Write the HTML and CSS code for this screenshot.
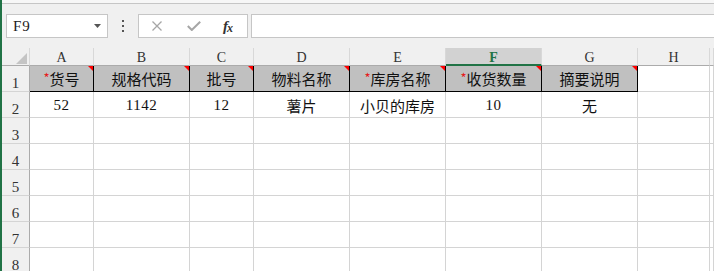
FILE: index.html
```html
<!DOCTYPE html>
<html lang="zh-CN">
<head>
<meta charset="utf-8">
<title>Sheet</title>
<link rel="stylesheet" href="styles.css">
</head>
<body>
<div class="app">
  <div class="topstrip"></div>
  <div class="toolbar">
    <div class="namebox">
      <span class="ref">F9</span>
      <svg class="caret" width="7" height="4" viewBox="0 0 7 4"><polygon points="0,0 7,0 3.5,4" fill="#555"/></svg>
    </div>
    <div class="dots"><i></i><i></i><i></i></div>
    <div class="fxbox">
      <svg class="ico-x" width="10" height="10" viewBox="0 0 10 10"><path d="M0.5 0.5 L9.5 9.5 M9.5 0.5 L0.5 9.5" stroke="#a6a6a6" stroke-width="1.3" fill="none"/></svg>
      <svg class="ico-ok" width="14" height="10" viewBox="0 0 14 10"><path d="M0.8 5 L4.8 9 L13.2 0.8" stroke="#a6a6a6" stroke-width="2" fill="none"/></svg>
      <span class="fx"><i>f</i><i class="sub">x</i></span>
    </div>
    <div class="formula"></div>
  </div>
  <div class="sheet">
    <div class="corner"><svg width="11" height="11" viewBox="0 0 11 11"><polygon points="11,0 11,11 0,11" fill="#c4c4c4"/></svg></div>
    <div class="colhead">A</div>
    <div class="colhead">B</div>
    <div class="colhead">C</div>
    <div class="colhead">D</div>
    <div class="colhead">E</div>
    <div class="colhead active">F</div>
    <div class="colhead">G</div>
    <div class="colhead">H</div>
    <div class="colhead"></div>

    <div class="rowhead">1</div>
    <div class="hcell"><span class="req">*</span>货号</div>
    <div class="hcell">规格代码</div>
    <div class="hcell">批号</div>
    <div class="hcell">物料名称</div>
    <div class="hcell"><span class="req">*</span>库房名称</div>
    <div class="hcell"><span class="req">*</span>收货数量</div>
    <div class="hcell">摘要说明</div>
    <div class="cell"></div>
    <div class="cell"></div>

    <div class="rowhead">2</div>
    <div class="cell num">52</div>
    <div class="cell num">1142</div>
    <div class="cell num">12</div>
    <div class="cell txt">薯片</div>
    <div class="cell txt">小贝的库房</div>
    <div class="cell num">10</div>
    <div class="cell txt">无</div>
    <div class="cell"></div>
    <div class="cell"></div>

    <div class="rowhead">3</div>
    <div class="cell"></div><div class="cell"></div><div class="cell"></div><div class="cell"></div><div class="cell"></div><div class="cell"></div><div class="cell"></div><div class="cell"></div><div class="cell"></div>
    <div class="rowhead">4</div>
    <div class="cell"></div><div class="cell"></div><div class="cell"></div><div class="cell"></div><div class="cell"></div><div class="cell"></div><div class="cell"></div><div class="cell"></div><div class="cell"></div>
    <div class="rowhead">5</div>
    <div class="cell"></div><div class="cell"></div><div class="cell"></div><div class="cell"></div><div class="cell"></div><div class="cell"></div><div class="cell"></div><div class="cell"></div><div class="cell"></div>
    <div class="rowhead">6</div>
    <div class="cell"></div><div class="cell"></div><div class="cell"></div><div class="cell"></div><div class="cell"></div><div class="cell"></div><div class="cell"></div><div class="cell"></div><div class="cell"></div>
    <div class="rowhead">7</div>
    <div class="cell"></div><div class="cell"></div><div class="cell"></div><div class="cell"></div><div class="cell"></div><div class="cell"></div><div class="cell"></div><div class="cell"></div><div class="cell"></div>
    <div class="rowhead">8</div>
    <div class="cell"></div><div class="cell"></div><div class="cell"></div><div class="cell"></div><div class="cell"></div><div class="cell"></div><div class="cell"></div><div class="cell"></div><div class="cell"></div>
  </div>
</div>
</body>
</html>
```

FILE: styles.css
```css
* { box-sizing: border-box; }
html, body { margin: 0; padding: 0; }
body {
  width: 714px;
  height: 271px;
  overflow: hidden;
  background: #f0f0f0;
  font-family: "Noto Sans CJK SC", "Noto Sans", sans-serif;
}
.app {
  height: 271px;
  border-left: 2px solid #217346;
  background: #f0f0f0;
  overflow: hidden;
}
.topstrip {
  height: 4px;
  background: #f7f7f7;
  border-bottom: 1px solid #c6c6c6;
}
.toolbar {
  height: 44px;
  display: flex;
  align-items: flex-start;
  padding-top: 10px;
}
.namebox {
  margin-left: 4px;
  width: 102px;
  height: 24px;
  background: #fff;
  border: 1px solid #c6c6c6;
  display: flex;
  align-items: center;
  padding-left: 6px;
  padding-right: 6px;
}
.ref {
  font-family: "Liberation Serif", "Times New Roman", serif;
  font-size: 15px;
  color: #222;
  line-height: 1;
  letter-spacing: 1px;
  padding-top: 1px;
}
.caret { margin-left: auto; }
.dots {
  margin-left: 14px;
  width: 2px;
  height: 24px;
  display: flex;
  flex-direction: column;
  justify-content: center;
  gap: 3px;
}
.dots i {
  display: block;
  width: 2px;
  height: 2px;
  background: #555;
}
.fxbox {
  margin-left: 14px;
  width: 110px;
  height: 24px;
  background: #fff;
  border: 1px solid #c6c6c6;
  display: flex;
  align-items: center;
  padding-left: 13px;
}
.ico-ok { margin-left: 25px; }
.fx {
  margin-left: 22px;
  font-family: "Liberation Serif", "Times New Roman", serif;
  font-size: 15px;
  color: #333;
  line-height: 1;
  font-weight: bold;
}
.fx .sub { font-size: 12px; position: relative; top: 1px; margin-left: -1px; }
.formula {
  margin-left: 3px;
  flex: 1;
  height: 24px;
  background: #fff;
  border: 1px solid #c6c6c6;
  border-right: none;
}
.sheet {
  display: grid;
  grid-template-columns: 28px 64px 96px 64px 96px 96px 96px 96px 72px 1fr;
  grid-template-rows: 18px repeat(8, 26px);
}
.corner {
  background: #f0f0f0;
  border-right: 1px solid #d8d8d8;
  border-bottom: 1px solid #ababab;
  display: flex;
  align-items: flex-end;
  justify-content: flex-end;
  padding: 0 2px 1px 0;
}
.corner svg { display: block; }
.colhead {
  background: #f0f0f0;
  border-right: 1px solid #d8d8d8;
  border-bottom: 1px solid #ababab;
  display: flex;
  align-items: center;
  justify-content: center;
  font-family: "Liberation Serif", "Times New Roman", serif;
  font-size: 14px;
  color: #333;
  padding-top: 2px;
}
.colhead.active {
  background: #d2d2d2;
  border-bottom: 2px solid #217346;
  color: #217346;
  font-weight: bold;
  padding-top: 3px;
}
.rowhead {
  background: #f0f0f0;
  border-right: 1px solid #ababab;
  border-bottom: 1px solid #d4d4d4;
  display: flex;
  align-items: flex-end;
  justify-content: center;
  font-family: "Liberation Serif", "Times New Roman", serif;
  font-size: 15px;
  line-height: 15px;
  color: #333;
}
.cell {
  background: #fff;
  border-right: 1px solid #d4d4d4;
  border-bottom: 1px solid #d4d4d4;
  display: flex;
  align-items: center;
  justify-content: center;
  color: #111;
}
.cell.num {
  font-family: "Liberation Serif", "Times New Roman", serif;
  font-size: 15px;
  padding-top: 2px;
  letter-spacing: 0.5px;
}
.cell.txt {
  font-size: 15px;
  padding-top: 1px;
}
.hcell {
  position: relative;
  background: #c0c0c0;
  border-right: 1px solid #000;
  border-bottom: 1px solid #000;
  display: flex;
  align-items: center;
  justify-content: center;
  font-size: 15px;
  color: #111;
}
.hcell::after {
  content: "";
  position: absolute;
  top: 0;
  right: 0;
  border-top: 5px solid #ff0000;
  border-left: 5px solid transparent;
}
.req {
  color: #e51c1c;
  font-size: 13px;
  align-self: flex-start;
  margin-top: 5px;
  line-height: 1;
}
```
